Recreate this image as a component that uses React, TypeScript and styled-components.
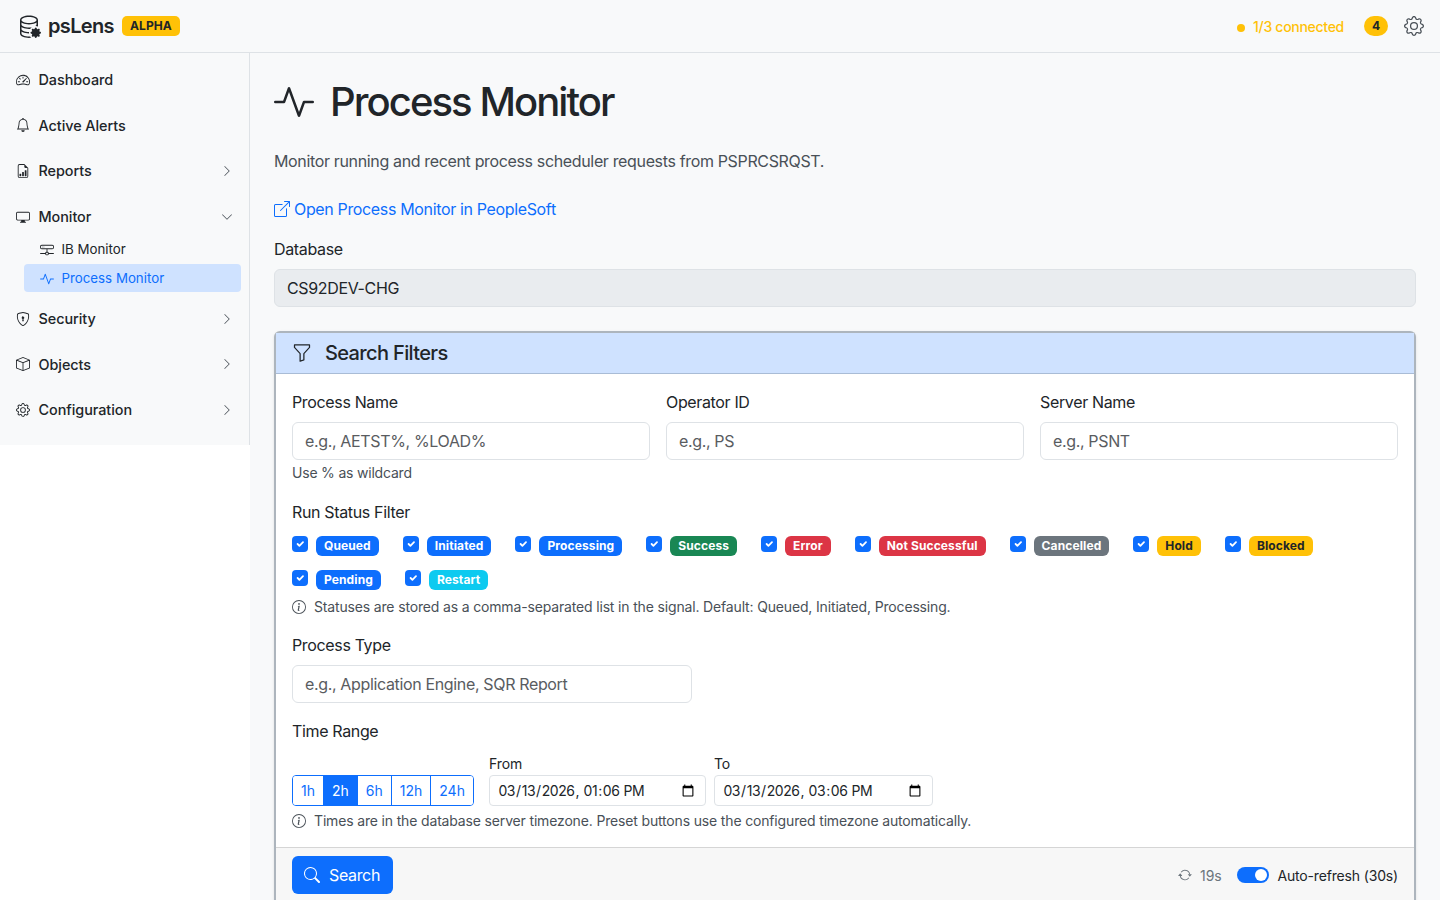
import React from "react";
import styled, { createGlobalStyle } from "styled-components";
import {
  BsActivity,
  BsArrowRepeat,
  BsBell,
  BsBox,
  BsBoxArrowUpRight,
  BsChevronDown,
  BsChevronRight,
  BsDatabaseGear,
  BsDisplay,
  BsFileEarmarkBarGraph,
  BsFunnel,
  BsGear,
  BsHddNetwork,
  BsInfoCircle,
  BsSearch,
  BsShieldLock,
  BsSpeedometer2,
} from "react-icons/bs";

type BadgeTone = "primary" | "success" | "danger" | "secondary" | "warning" | "info";

const statuses: { label: string; tone: BadgeTone }[] = [
  { label: "Queued", tone: "primary" },
  { label: "Initiated", tone: "primary" },
  { label: "Processing", tone: "primary" },
  { label: "Success", tone: "success" },
  { label: "Error", tone: "danger" },
  { label: "Not Successful", tone: "danger" },
  { label: "Cancelled", tone: "secondary" },
  { label: "Hold", tone: "warning" },
  { label: "Blocked", tone: "warning" },
  { label: "Pending", tone: "primary" },
  { label: "Restart", tone: "info" },
];

const toneColors: Record<BadgeTone, { bg: string; fg: string }> = {
  primary: { bg: "#0d6efd", fg: "#fff" },
  success: { bg: "#198754", fg: "#fff" },
  danger: { bg: "#dc3545", fg: "#fff" },
  secondary: { bg: "#6c757d", fg: "#fff" },
  warning: { bg: "#ffc107", fg: "#212529" },
  info: { bg: "#0dcaf0", fg: "#fff" },
};

const presets = ["1h", "2h", "6h", "12h", "24h"];

const App = () => {
  return (
    <>
      <GlobalStyle />
      <Shell>
        <Header>
          <Brand>
            <BsDatabaseGear size={24} />
            <BrandName>psLens</BrandName>
            <AlphaBadge>ALPHA</AlphaBadge>
          </Brand>
          <HeaderRight>
            <StatusDot />
            <Connected>1/3 connected</Connected>
            <CountPill>4</CountPill>
            <BsGear size={20} color="#495057" />
          </HeaderRight>
        </Header>
        <Body>
          <Sidebar>
            <NavRow>
              <BsSpeedometer2 size={14} />
              Dashboard
            </NavRow>
            <NavRow>
              <BsBell size={14} />
              Active Alerts
            </NavRow>
            <NavRow>
              <BsFileEarmarkBarGraph size={14} />
              Reports
              <Chevron>
                <BsChevronRight size={12} />
              </Chevron>
            </NavRow>
            <NavRow>
              <BsDisplay size={14} />
              Monitor
              <Chevron>
                <BsChevronDown size={12} />
              </Chevron>
            </NavRow>
            <SubList>
              <SubRow>
                <BsHddNetwork size={14} />
                IB Monitor
              </SubRow>
              <SubRow $active>
                <BsActivity size={14} />
                Process Monitor
              </SubRow>
            </SubList>
            <NavRow>
              <BsShieldLock size={14} />
              Security
              <Chevron>
                <BsChevronRight size={12} />
              </Chevron>
            </NavRow>
            <NavRow>
              <BsBox size={14} />
              Objects
              <Chevron>
                <BsChevronRight size={12} />
              </Chevron>
            </NavRow>
            <NavRow>
              <BsGear size={14} />
              Configuration
              <Chevron>
                <BsChevronRight size={12} />
              </Chevron>
            </NavRow>
          </Sidebar>
          <Main>
            <Title>
              <BsActivity size={40} />
              Process Monitor
            </Title>
            <Lead>Monitor running and recent process scheduler requests from PSPRCSRQST.</Lead>
            <ExternalLink href="#">
              <BsBoxArrowUpRight size={16} />
              Open Process Monitor in PeopleSoft
            </ExternalLink>
            <Label>Database</Label>
            <DatabaseValue>CS92DEV-CHG</DatabaseValue>
            <Card>
              <CardHeader>
                <BsFunnel size={20} />
                <CardTitle>Search Filters</CardTitle>
              </CardHeader>
              <CardBody>
                <FieldGrid>
                  <div>
                    <Label>Process Name</Label>
                    <TextInput placeholder="e.g., AETST%, %LOAD%" />
                    <Hint>Use % as wildcard</Hint>
                  </div>
                  <div>
                    <Label>Operator ID</Label>
                    <TextInput placeholder="e.g., PS" />
                  </div>
                  <div>
                    <Label>Server Name</Label>
                    <TextInput placeholder="e.g., PSNT" />
                  </div>
                </FieldGrid>
                <StatusLabel>Run Status Filter</StatusLabel>
                <StatusWrap>
                  {statuses.map((status) => (
                    <StatusItem key={status.label}>
                      <CheckBox>
                        <svg width="12" height="12" viewBox="0 0 20 20" fill="none">
                          <path d="M6 10l3 3l6-6" stroke="#fff" strokeWidth="3" strokeLinecap="round" strokeLinejoin="round" />
                        </svg>
                      </CheckBox>
                      <Badge $tone={status.tone}>{status.label}</Badge>
                    </StatusItem>
                  ))}
                </StatusWrap>
                <StatusInfo>
                  <BsInfoCircle size={14} />
                  Statuses are stored as a comma-separated list in the signal. Default: Queued, Initiated, Processing.
                </StatusInfo>
                <TypeLabel>Process Type</TypeLabel>
                <TypeInput placeholder="e.g., Application Engine, SQR Report" />
                <TimeLabel>Time Range</TimeLabel>
                <TimeRow>
                  <PresetGroup>
                    {presets.map((preset) => (
                      <PresetButton key={preset} $active={preset === "2h"}>
                        {preset}
                      </PresetButton>
                    ))}
                  </PresetGroup>
                  <DateFields>
                    <DateField $width={217}>
                      <SmallLabel>From</SmallLabel>
                      <DateInput type="datetime-local" defaultValue="2026-03-13T13:06" />
                    </DateField>
                    <DateField $width={219}>
                      <SmallLabel>To</SmallLabel>
                      <DateInput type="datetime-local" defaultValue="2026-03-13T15:06" />
                    </DateField>
                  </DateFields>
                </TimeRow>
                <InfoLine>
                  <BsInfoCircle size={14} />
                  Times are in the database server timezone. Preset buttons use the configured timezone automatically.
                </InfoLine>
              </CardBody>
              <CardFooter>
                <SearchButton>
                  <BsSearch size={16} />
                  Search
                </SearchButton>
                <RefreshGroup>
                  <Countdown>
                    <BsArrowRepeat size={14} />
                    19s
                  </Countdown>
                  <Toggle />
                  <RefreshLabel>Auto-refresh (30s)</RefreshLabel>
                </RefreshGroup>
              </CardFooter>
            </Card>
          </Main>
        </Body>
      </Shell>
    </>
  );
};

const GlobalStyle = createGlobalStyle`
  * {
    box-sizing: border-box;
  }

  html,
  body {
    margin: 0;
    height: 100%;
    overflow: hidden;
    background: #fff;
    color: #212529;
    font-family: Inter, "Liberation Sans", sans-serif;
    font-size: 16px;
    line-height: 1.5;
    letter-spacing: -0.35px;
  }
`;

const Shell = styled.div`
  height: 100vh;
  display: flex;
  flex-direction: column;
  overflow: hidden;
`;

const Header = styled.header`
  flex: none;
  height: 53px;
  display: flex;
  align-items: center;
  justify-content: space-between;
  padding: 0 16px 0 17px;
  background: #f8f9fa;
  border-bottom: 1px solid #dee2e6;
`;

const Brand = styled.div`
  display: flex;
  align-items: center;
`;

const BrandName = styled.span`
  margin-left: 7px;
  font-size: 20px;
  font-weight: 600;
  letter-spacing: -0.65px;
`;

const AlphaBadge = styled.span`
  margin-left: 8px;
  padding: 0 8px;
  height: 20px;
  display: flex;
  align-items: center;
  border-radius: 5px;
  background: #ffc107;
  font-size: 12px;
  font-weight: 700;
  letter-spacing: 0.1px;
`;

const HeaderRight = styled.div`
  display: flex;
  align-items: center;
`;

const StatusDot = styled.span`
  width: 8px;
  height: 8px;
  margin-top: 3px;
  border-radius: 50%;
  background: #ffc107;
`;

const Connected = styled.span`
  margin-left: 8px;
  font-size: 14px;
  font-weight: 500;
  letter-spacing: -0.28px;
  color: #ffc107;
`;

const CountPill = styled.span`
  margin: 0 16px 0 20px;
  width: 24px;
  height: 20px;
  display: flex;
  align-items: center;
  justify-content: center;
  border-radius: 10px;
  background: #ffc107;
  font-size: 12px;
  font-weight: 700;
`;

const Body = styled.div`
  flex: 1;
  min-height: 0;
  display: flex;
  align-items: flex-start;
`;

const Sidebar = styled.nav`
  flex: none;
  width: 250px;
  padding: 4px 8px 12px 0;
  background: #f8f9fa;
  border-right: 1px solid #dee2e6;
`;

const NavRow = styled.div`
  display: flex;
  align-items: center;
  gap: 8.5px;
  height: 45.6px;
  padding-left: 16px;
  font-size: 14.4px;
  font-weight: 500;
  letter-spacing: -0.05px;
  color: #212529;
`;

const Chevron = styled.span`
  display: flex;
  margin-left: auto;
  margin-right: 8px;
  color: #495057;
`;

const SubList = styled.div`
  margin: -4.2px 0 3.9px 24px;
  display: flex;
  flex-direction: column;
  gap: 1px;
`;

const SubRow = styled.div<{ $active?: boolean }>`
  height: 28px;
  display: flex;
  align-items: center;
  gap: 7.5px;
  padding: 2px 0 0 16px;
  border-radius: 4px;
  font-size: 13.3px;
  letter-spacing: 0;
  color: ${({ $active }) => ($active ? "#0d6efd" : "#212529")};
  background: ${({ $active }) => ($active ? "#cfe2ff" : "transparent")};
`;

const Main = styled.main`
  flex: 1;
  min-width: 0;
  height: 100%;
  overflow: hidden;
  padding: 24px;
  background: #f8f9fa;
`;

const Title = styled.h1`
  margin: 0 0 22px;
  height: 50px;
  display: flex;
  align-items: center;
  gap: 16px;
  font-size: 40px;
  font-weight: 500;
  line-height: 1.2;
  letter-spacing: -1.93px;
`;

const Lead = styled.p`
  margin: 0 0 24px;
  color: #495057;
`;

const ExternalLink = styled.a`
  display: flex;
  align-items: center;
  gap: 4px;
  margin-bottom: 16px;
  color: #0d6efd;
  text-decoration: none;
`;

const Label = styled.div`
  margin-bottom: 8px;
`;

const DatabaseValue = styled.div`
  height: 38px;
  display: flex;
  align-items: center;
  padding: 0 12px;
  margin-bottom: 24px;
  background: #e9ecef;
  border: 1px solid #dee2e6;
  border-radius: 6px;
`;

const Card = styled.section`
  background: #fff;
  border: 2px solid #adb5bd;
  border-bottom: 0;
  border-radius: 6px 6px 0 0;
  box-shadow: 0 1px 3px rgba(0, 0, 0, 0.1);
`;

const CardHeader = styled.div`
  height: 41px;
  display: flex;
  align-items: center;
  gap: 13px;
  padding: 0 16px;
  background: #cfe2ff;
  border-bottom: 1px solid #a9bcd6;
`;

const CardTitle = styled.h5`
  margin: 0;
  font-size: 20px;
  font-weight: 500;
  letter-spacing: -0.64px;
`;

const CardBody = styled.div`
  padding: 16px 16px 16px;
`;

const FieldGrid = styled.div`
  display: grid;
  grid-template-columns: repeat(3, 1fr);
  gap: 16px;
`;

const TextInput = styled.input`
  display: block;
  width: 100%;
  height: 38px;
  padding: 0 12px;
  border: 1px solid #dee2e6;
  border-radius: 6px;
  background: #fff;
  font: inherit;
  letter-spacing: -0.35px;
  outline: none;

  &::placeholder {
    color: #595c5f;
    opacity: 1;
  }
`;

const Hint = styled.div`
  margin-top: 2px;
  font-size: 14px;
  letter-spacing: -0.2px;
  color: #495057;
`;

const StatusLabel = styled(Label)`
  margin-top: 17px;
  margin-bottom: 12px;
`;

const StatusWrap = styled.div`
  display: flex;
  flex-wrap: wrap;
  gap: 14px 24px;
`;

const StatusItem = styled.label`
  display: flex;
  align-items: flex-start;
  gap: 8px;
  height: 20px;
`;

const CheckBox = styled.span`
  width: 16px;
  height: 16px;
  display: flex;
  align-items: center;
  justify-content: center;
  border-radius: 4px;
  background: #0d6efd;
`;

const Badge = styled.span<{ $tone: BadgeTone }>`
  height: 20px;
  display: flex;
  align-items: center;
  padding: 0 8px;
  border-radius: 6px;
  font-size: 12px;
  font-weight: 700;
  letter-spacing: 0.11px;
  color: ${({ $tone }) => toneColors[$tone].fg};
  background: ${({ $tone }) => toneColors[$tone].bg};
`;

const InfoLine = styled.div`
  display: flex;
  align-items: center;
  gap: 8px;
  margin-top: 4px;
  font-size: 14px;
  letter-spacing: -0.16px;
  color: #495057;
`;

const StatusInfo = styled(InfoLine)`
  margin-top: 6px;
`;

const TypeLabel = styled(Label)`
  margin-top: 16px;
`;

const TypeInput = styled(TextInput)`
  width: 400px;
`;

const TimeLabel = styled(Label)`
  margin-top: 16px;
  margin-bottom: 10px;
`;

const TimeRow = styled.div`
  display: flex;
  align-items: flex-end;
  gap: 15px;
`;

const PresetGroup = styled.div`
  display: flex;
  height: 31px;
  border: 1px solid #0d6efd;
  border-radius: 4px;
  overflow: hidden;
`;

const PresetButton = styled.button<{ $active?: boolean }>`
  padding: 0 8px;
  border: 0;
  border-left: 1px solid #0d6efd;
  font: inherit;
  font-size: 14px;
  letter-spacing: 0;
  color: ${({ $active }) => ($active ? "#fff" : "#0d6efd")};
  background: ${({ $active }) => ($active ? "#0d6efd" : "#fff")};

  &:first-child {
    border-left: 0;
  }
`;

const DateFields = styled.div`
  display: flex;
  gap: 8px;
`;

const DateField = styled.div<{ $width: number }>`
  width: ${({ $width }) => $width}px;
`;

const SmallLabel = styled.div`
  font-size: 14px;
  line-height: 21px;
  margin-bottom: 1px;
  letter-spacing: -0.1px;
`;

const DateInput = styled.input`
  display: block;
  width: 100%;
  height: 31px;
  padding: 0 8px 0 7.5px;
  border: 1px solid #dee2e6;
  border-radius: 4px;
  background: #fff;
  font: inherit;
  font-size: 14px;
  letter-spacing: -0.45px;
  color: #212529;
  outline: none;
`;

const CardFooter = styled.div`
  display: flex;
  align-items: center;
  justify-content: space-between;
  padding: 8px 16px;
  background: #f7f7f7;
  border-top: 1px solid #d5d5d5;
`;

const SearchButton = styled.button`
  height: 38px;
  display: flex;
  align-items: center;
  gap: 9px;
  padding: 0 13px 0 12px;
  border: 0;
  border-radius: 6px;
  background: #0d6efd;
  color: #fff;
  font: inherit;
  letter-spacing: -0.35px;
`;

const RefreshGroup = styled.div`
  display: flex;
  align-items: center;
  font-size: 14px;
  letter-spacing: -0.16px;
`;

const Countdown = styled.span`
  display: flex;
  align-items: center;
  gap: 8px;
  margin-right: 16px;
  color: #6c757d;
`;

const Toggle = styled.span`
  position: relative;
  width: 32px;
  height: 16px;
  margin-right: 8px;
  border-radius: 8px;
  background: #0d6efd;

  &::after {
    content: "";
    position: absolute;
    top: 2px;
    right: 2px;
    width: 12px;
    height: 12px;
    border-radius: 50%;
    background: #fff;
  }
`;

const RefreshLabel = styled.span`
  color: #212529;
`;

export default App;
